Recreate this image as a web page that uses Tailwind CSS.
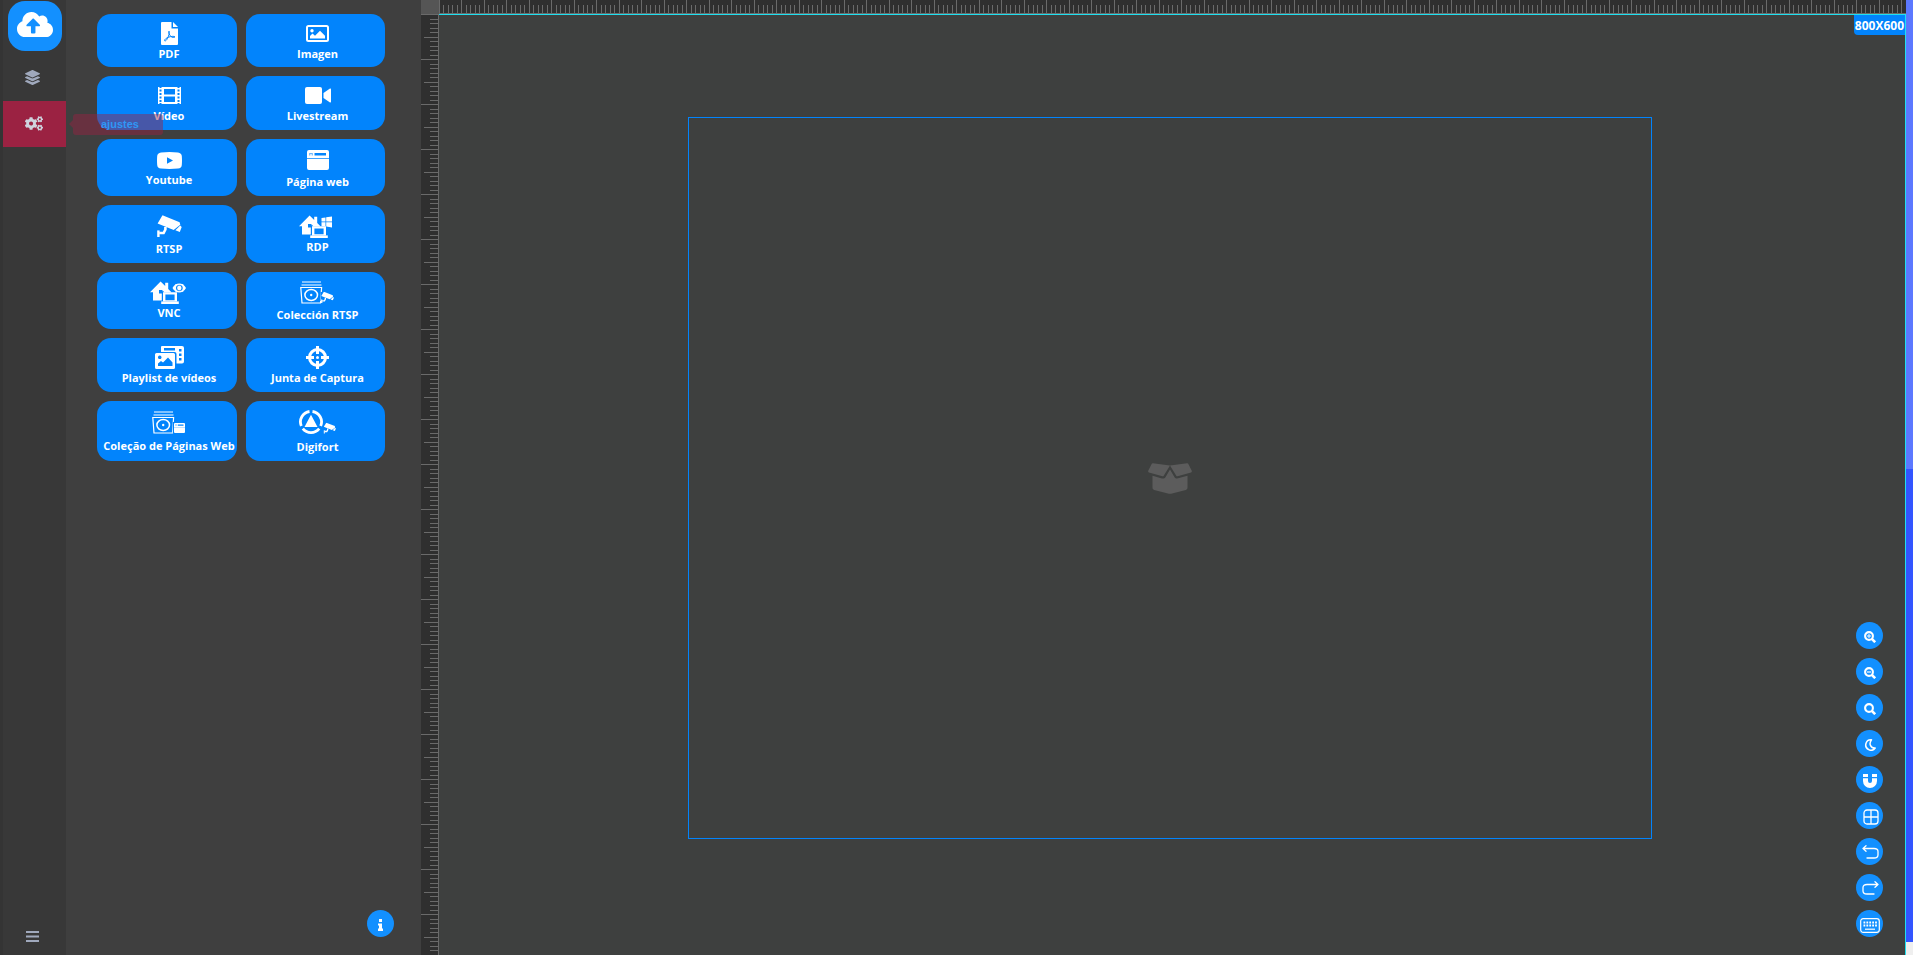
<!DOCTYPE html>
<html lang="es">
<head>
<meta charset="utf-8">
<title>Editor 800X600</title>
<script src="https://cdn.jsdelivr.net/npm/@tailwindcss/browser@4"></script>
</head>
<body class="flex h-screen overflow-hidden bg-[#3f3f3f] font-['Open_Sans',sans-serif]">

<!-- Shared icon shapes -->
<svg class="hidden" aria-hidden="true">
  <symbol id="camera" viewBox="0 0 25 23">
    <path d="M5.5.3 22.6 7.2l.7 2.6-6.6 5.2L.6 8.6z"/>
    <path d="m23.2 10.6 1.5 1.3-1.9 5.1-4.4-1.7z"/>
    <path d="M8.4 12v2.5L6.6 18H2.2" fill="none" stroke="currentColor" stroke-width="2.6"/>
    <path d="M.2 15.4h2.4V22H.2z"/>
  </symbol>
  <symbol id="home" viewBox="0 0 29 23">
    <path d="M0 11.2 10.6.4l4.6 4.5V1.7h3v6.2l3 3.1v.6h-8.8v7.8H3v-8.2z"/>
    <path fill="#0284fc" d="M9 9h3.500v3.500H9zM11.800 10.200h2v9.800h-2z"/>
    <path fill-rule="evenodd" d="M13 11.200h14v9.200H13zm2.400 2.200v5.800h9.200v-5.800z"/>
    <path d="M11.200 20.400h17.600V23H11.200z"/>
  </symbol>
  <symbol id="collection" viewBox="0 0 23 23">
    <g fill="none" stroke="currentColor">
      <path stroke-width="1.200" d="M2 1h19M1.500 4h20M2 22 .8 6.500h20.800L20.500 22z"/>
      <ellipse cx="11.200" cy="14" rx="6.300" ry="5.500" stroke-width="1.500"/>
    </g>
    <circle cx="11.200" cy="14" r="1.200"/>
  </symbol>
  <symbol id="window" viewBox="0 0 22 20">
    <path fill-rule="evenodd" d="M2 0h18a2 2 0 0 1 2 2v16a2 2 0 0 1-2 2H2a2 2 0 0 1-2-2V2a2 2 0 0 1 2-2zM7.500 3v2.400H19V3zM2.500 3v2.400h.7V3.500h1.600v1.900h.7V3zM0 8v.7h22V8z"/>
  </symbol>
  <symbol id="lens" viewBox="0 0 12 12">
    <circle cx="5" cy="5" r="3.900" fill="none" stroke="currentColor" stroke-width="2.100"/>
    <path d="m7.800 7.800 3.400 3.400" fill="none" stroke="currentColor" stroke-width="2.600"/>
  </symbol>
</svg>

<!-- Navigation rail -->
<nav class="flex w-[66px] shrink-0 flex-col border-l-3 border-[#343434] bg-[#383838]">
  <button aria-label="Subir" class="mt-px ml-[5px] flex h-[50px] w-[54px] items-center justify-center rounded-[17px] bg-[#1390ff] pb-1 text-white">
    <svg class="h-[29px] w-[36px]" viewBox="0 0 640 512" fill="currentColor"><path d="M537.6 226.6c4.1-10.7 6.4-22.4 6.4-34.6 0-53-43-96-96-96-19.7 0-38.1 6-53.3 16.2C367 64.2 315.3 32 256 32c-88.4 0-160 71.6-160 160 0 2.7.1 5.4.2 8.1C40.2 219.8 0 273.2 0 336c0 79.5 64.5 144 144 144h368c70.7 0 128-57.3 128-128 0-61.9-44-113.6-102.4-125.4zM393.4 288H328v112c0 8.8-7.2 16-16 16h-48c-8.8 0-16-7.2-16-16V288h-65.4c-14.3 0-21.4-17.2-11.3-27.3l105.4-105.4c6.2-6.2 16.4-6.2 22.6 0l105.4 105.4c10.1 10.1 2.9 27.3-11.3 27.3z"/></svg>
  </button>
  <button aria-label="Capas" class="mt-1 flex h-[46px] items-center justify-center pr-1 pb-0.5 text-[#a0a9bd]">
    <svg class="size-[15px]" viewBox="0 0 512 512" fill="currentColor"><path d="M12.41 148.02l232.94 105.67c6.8 3.09 14.49 3.09 21.29 0l232.94-105.67c16.55-7.51 16.55-32.52 0-40.03L266.65 2.31a25.607 25.607 0 0 0-21.29 0L12.41 107.98c-16.55 7.51-16.55 32.53 0 40.04zm487.18 88.28l-58.09-26.33-161.64 73.27c-7.56 3.43-15.59 5.17-23.86 5.17s-16.29-1.74-23.86-5.17L70.51 209.97l-58.1 26.33c-16.55 7.5-16.55 32.5 0 40l232.94 105.59c6.8 3.08 14.49 3.08 21.29 0L499.59 276.3c16.55-7.5 16.55-32.5 0-40zm0 127.8l-57.87-26.23-161.86 73.37c-7.56 3.43-15.59 5.17-23.86 5.17s-16.29-1.74-23.86-5.17L70.29 337.87 12.41 364.1c-16.55 7.5-16.55 32.5 0 40l232.94 105.59c6.8 3.08 14.49 3.08 21.29 0L499.59 404.1c16.55-7.5 16.55-32.5 0-40z"/></svg>
  </button>
  <button aria-label="Ajustes" aria-describedby="tip" class="relative flex h-[46px] items-center justify-center bg-[#9b2242] pr-px pb-px text-[#cfd3de]">
    <svg class="h-[15px] w-[18px]" viewBox="0 0 640 512" fill="currentColor"><path d="M512.1 191l-8.2 14.3c-3 5.3-9.4 7.5-15.1 5.4-11.8-4.4-22.6-10.7-32.1-18.6-4.6-3.8-5.8-10.5-2.8-15.7l8.2-14.3c-6.9-8-12.3-17.3-15.9-27.4h-16.5c-6 0-11.2-4.3-12.2-10.3-2-12-2.1-24.6 0-37.1 1-6 6.2-10.4 12.2-10.4h16.5c3.6-10.1 9-19.4 15.9-27.4l-8.2-14.3c-3-5.2-1.9-11.9 2.8-15.7 9.5-7.9 20.4-14.2 32.1-18.6 5.7-2.1 12.1.1 15.1 5.4l8.2 14.3c10.5-1.9 21.2-1.9 31.7 0L552 6.3c3-5.3 9.4-7.5 15.1-5.4 11.8 4.4 22.6 10.7 32.1 18.6 4.6 3.8 5.8 10.5 2.8 15.7l-8.2 14.3c6.9 8 12.3 17.3 15.9 27.4h16.5c6 0 11.2 4.3 12.2 10.3 2 12 2.1 24.6 0 37.1-1 6-6.2 10.4-12.2 10.4h-16.5c-3.6 10.1-9 19.4-15.9 27.4l8.2 14.3c3 5.2 1.9 11.9-2.8 15.7-9.5 7.9-20.4 14.2-32.1 18.6-5.7 2.1-12.1-.1-15.1-5.4l-8.2-14.3c-10.4 1.9-21.2 1.9-31.7 0zm-10.5-58.8c38.5 29.6 82.4-14.3 52.8-52.8-38.5-29.7-82.4 14.3-52.8 52.8zM386.3 286.1l33.7 16.8c10.1 5.8 14.5 18.1 10.5 29.1-8.9 24.2-26.4 46.4-42.6 65.8-7.4 8.9-20.2 11.1-30.3 5.3l-29.1-16.8c-16 13.7-34.6 24.6-54.9 31.7v33.6c0 11.6-8.3 21.6-19.7 23.6-24.6 4.2-50.4 4.4-75.9 0-11.5-2-20-11.9-20-23.6V418c-20.3-7.2-38.9-18-54.9-31.7L74 403c-10 5.8-22.9 3.6-30.3-5.3-16.2-19.4-33.3-41.6-42.2-65.7-4-10.9.4-23.2 10.5-29.1l33.3-16.8c-3.9-20.9-3.9-42.4 0-63.4L12 205.8c-10.1-5.8-14.6-18.1-10.5-29 8.9-24.2 26-46.4 42.2-65.8 7.4-8.9 20.2-11.1 30.3-5.3l29.1 16.8c16-13.7 34.6-24.6 54.9-31.7V57.1c0-11.5 8.2-21.5 19.6-23.5 24.6-4.2 50.5-4.4 76-.1 11.5 2 20 11.9 20 23.6v33.6c20.3 7.2 38.9 18 54.9 31.7l29.1-16.8c10-5.8 22.9-3.6 30.3 5.3 16.2 19.4 33.2 41.6 42.1 65.8 4 10.9.1 23.2-10 29.1l-33.7 16.8c3.9 21 3.9 42.5 0 63.5zm-117.6 21.1c59.2-77-28.7-164.9-105.7-105.7-59.2 77 28.7 164.9 105.7 105.7zm243.4 182.7l-8.2 14.3c-3 5.3-9.4 7.5-15.1 5.4-11.8-4.4-22.6-10.7-32.1-18.6-4.6-3.8-5.8-10.5-2.8-15.7l8.2-14.3c-6.9-8-12.3-17.3-15.9-27.4h-16.5c-6 0-11.2-4.3-12.2-10.3-2-12-2.1-24.6 0-37.1 1-6 6.2-10.4 12.2-10.4h16.5c3.6-10.1 9-19.4 15.9-27.4l-8.2-14.3c-3-5.2-1.9-11.9 2.8-15.7 9.5-7.9 20.4-14.2 32.1-18.6 5.7-2.1 12.1.1 15.1 5.4l8.2 14.3c10.5-1.9 21.2-1.9 31.7 0l8.2-14.3c3-5.3 9.4-7.5 15.1-5.4 11.8 4.4 22.6 10.7 32.1 18.6 4.6 3.8 5.8 10.5 2.8 15.7l-8.2 14.3c6.9 8 12.3 17.3 15.9 27.4h16.5c6 0 11.2 4.3 12.2 10.3 2 12 2.1 24.6 0 37.1-1 6-6.2 10.4-12.2 10.4h-16.5c-3.6 10.1-9 19.4-15.9 27.4l8.2 14.3c3 5.2 1.9 11.9-2.8 15.7-9.5 7.9-20.4 14.2-32.1 18.6-5.7 2.1-12.1-.1-15.1-5.4l-8.2-14.3c-10.4 1.9-21.2 1.9-31.7 0zM501.6 431c38.5 29.6 82.4-14.3 52.8-52.8-38.5-29.6-82.4 14.3-52.8 52.8z"/></svg>
    <!-- Fading tooltip -->
    <span id="tip" role="tooltip" class="absolute top-[13px] left-[70px] z-10 flex h-[21px] w-[90px] items-center rounded-[3px] bg-[#9b2242]/45 pb-0.5 pl-7 font-['Liberation_Sans',sans-serif] text-[11px] leading-4 font-bold text-[#2f97f5]">
      <span class="absolute top-[6px] -left-1 border-y-4 border-r-4 border-y-transparent border-r-[#9b2242]/45"></span>ajustes</span>
  </button>
  <button aria-label="Menú" class="mt-auto mb-3 flex h-[15px] items-center justify-center pr-[5px] text-[#a0a9bd]">
    <svg class="h-[12px] w-[13px]" viewBox="0 0 13 12" fill="currentColor"><path d="M0 1h13v2H0zM0 5.500h13v2H0zM0 10h13v2H0z"/></svg>
  </button>
</nav>

<!-- Widget panel -->
<aside class="flex w-[355px] shrink-0 flex-col justify-between bg-[#3f3f3f] pt-[14px] pr-[27px] pb-[18px] pl-[31px]">
  <div class="mr-[9px] grid grid-cols-[140px_139px] grid-rows-[53px_54px_57px_58px_57px_54px_60px] gap-[9px] text-[11px] leading-[15px] font-bold whitespace-nowrap text-white">
    <button class="flex flex-col items-center rounded-[14px] bg-[#0284fc] pt-[7px] pl-1">
      <span class="mb-px flex h-6 items-center"><svg class="h-[23px] w-[17px]" viewBox="0 0 17 23" fill="currentColor"><path d="M1 0h9.500v6.500H17V22a1 1 0 0 1-1 1H1a1 1 0 0 1-1-1V1a1 1 0 0 1 1-1z"/><path d="M12 0l5 5h-5z"/><path d="M8 9.200c-1 1.800.8 3.800 2 5.300 1.200 1.300 3.500 1.100 4 .4-.8-1-4.500-.5-6.500.3-2 .8-4.300 2.200-3.800 3.600 1.500.6 3-2.500 3.800-4.800.6-1.800 1-3.800.5-4.800z" fill="none" stroke="#0284fc" stroke-width="1"/></svg></span>
      PDF</button>
    <button class="flex flex-col items-center rounded-[14px] bg-[#0284fc] pt-[7px] pl-1">
      <span class="mb-px flex h-6 items-center"><svg class="h-[17px] w-[23px]" viewBox="0 0 23 17" fill="currentColor"><rect x="1" y="1" width="21" height="15" rx="1.500" fill="none" stroke="currentColor" stroke-width="2"/><circle cx="6" cy="5.700" r="1.700"/><path d="M4 13.500V11l2.500-2.500L9 10.700l5-5 5 5v2.800z"/></svg></span>
      Imagen</button>

    <button class="flex flex-col items-center rounded-[14px] bg-[#0284fc] pt-[7px] pl-1">
      <span class="mb-px flex h-6 items-center"><svg class="h-[17px] w-[23px]" viewBox="0 0 23 17" fill="currentColor"><path fill-rule="evenodd" d="M0 0h1.500v1h2V0h16v1h2V0H23v17h-1.500v-1h-2v1h-16v-1h-2v1H0zM1.500 2.500v2h2v-2zm0 3.500v2h2V6zm0 3.500v2h2v-2zm0 3.500v2h2v-2zM19.500 2.500v2h2v-2zm0 3.500v2h2V6zm0 3.500v2h2v-2zm0 3.500v2h2v-2zM6 2v5.500h11V2zm0 7.500V15h11V9.500z"/></svg></span>
      Vídeo</button>
    <button class="flex flex-col items-center rounded-[14px] bg-[#0284fc] pt-[7px] pl-1">
      <span class="mb-px flex h-6 items-center"><svg class="h-[17px] w-[26px]" viewBox="0 0 26 17" fill="currentColor"><rect width="17" height="17" rx="2"/><path d="M18.500 6 25 1.500q1-.3 1 .7v12.600q0 1-1 .7L18.500 11z"/></svg></span>
      Livestream</button>

    <button class="flex flex-col items-center rounded-[14px] bg-[#0284fc] pt-[9px] pl-1">
      <span class="flex h-6 items-center"><svg class="h-[17px] w-[25px]" viewBox="0 0 25 17" fill="currentColor"><path fill-rule="evenodd" d="M4 .4Q12.500-.4 21 .4q3.600.5 3.800 3.600.4 4.500 0 9-.2 3.100-3.800 3.600-8.500.8-17 0Q.4 16.100.2 13q-.4-4.500 0-9Q.4.900 4 .4zM10 5.200v6.600l6-3.300z"/></svg></span>
      Youtube</button>
    <button class="flex flex-col items-center rounded-[14px] bg-[#0284fc] pt-[9px] pl-1">
      <span class="mb-0.5 flex h-6 items-center"><svg class="h-5 w-[22px]" fill="currentColor"><use href="#window"/></svg></span>
      Página web</button>

    <button class="flex flex-col items-center rounded-[14px] bg-[#0284fc] pt-[9px] pl-1">
      <span class="mb-[3px] flex h-6 items-center"><svg class="h-[23px] w-[25px]" fill="currentColor"><use href="#camera"/></svg></span>
      RTSP</button>
    <button class="flex flex-col items-center rounded-[14px] bg-[#0284fc] pt-[9px]">
      <span class="mb-px flex h-6 items-center"><svg class="h-[23px] w-[33px]" viewBox="0 0 33 23" fill="currentColor"><use href="#home" width="29" height="23"/><path d="M22.500 3l4-.6v4.200h-4zM27.200 2.300l5.800-.9v5.200h-5.800zM22.500 7.300h4v4.200l-4-.6zM27.200 7.300H33v5.200l-5.800-.9z"/></svg></span>
      <span class="pl-1">RDP</span></button>

    <button class="flex flex-col items-center rounded-[14px] bg-[#0284fc] pt-2 pl-1">
      <span class="mb-px flex h-6 items-center"><svg class="mr-0.5 h-[23px] w-[36px]" viewBox="0 0 36 23" fill="currentColor"><use href="#home" width="29" height="23"/><path fill-rule="evenodd" d="M22.500 7C25.500 1.100 33 1.100 36 7c-3 5.900-10.500 5.900-13.500 0zm6.800-3.400a3.400 3.400 0 1 0 .1 0z"/><path d="M25.300 4.200h8v-1h-8zM25.300 10.800h8v-1h-8z"/><circle cx="29.300" cy="7" r="2.200"/></svg></span>
      VNC</button>
    <button class="flex flex-col items-center rounded-[14px] bg-[#0284fc] pt-2 pl-1">
      <span class="mb-[3px] flex h-6 items-center"><svg class="mr-px h-[23px] w-[34px]" viewBox="0 0 34 23" fill="currentColor"><use href="#collection" width="23" height="23"/><path fill="#0284fc" d="M20.500 11h3v9h-3z"/><use href="#camera" x="21" y="10.500" width="13" height="12"/></svg></span>
      Colección RTSP</button>

    <button class="flex flex-col items-center rounded-[14px] bg-[#0284fc] pt-[7px] pl-1">
      <span class="mb-px flex h-6 items-center"><svg class="h-[23px] w-[29px]" viewBox="0 0 29 23" fill="currentColor"><path fill-rule="evenodd" d="M7 0h20a2 2 0 0 1 2 2v13.500a2 2 0 0 1-2 2h-5.500V8a2 2 0 0 0-2-2H6V1a1 1 0 0 1 1-1zm2 2v2.500h11V2zM24 3v2.500h2.500V3zm0 4.500V10h2.500V7.500zm0 4.500v2.500h2.500V12z"/><path fill-rule="evenodd" d="M1.500 7h17A1.500 1.500 0 0 1 20 8.500v13a1.500 1.500 0 0 1-1.500 1.500h-17A1.500 1.500 0 0 1 0 21.500v-13A1.500 1.500 0 0 1 1.500 7zM4.700 9.500a1.800 1.800 0 1 0 .1 0zM3 20h14.500v-3.500L13 11.500l-5 5-2-1.500-3 2.500z"/></svg></span>
      Playlist de vídeos</button>
    <button class="flex flex-col items-center rounded-[14px] bg-[#0284fc] pt-[7px] pl-1">
      <span class="mb-px flex h-6 items-center"><svg class="size-[23px]" viewBox="0 0 23 23" fill="none" stroke="currentColor"><circle cx="11.500" cy="11.500" r="8" stroke-width="3"/><path stroke-width="3" d="M11.500 0v8M11.500 15V23M0 11.500h8M15 11.500H23"/><circle cx="11.500" cy="11.500" r="1.500" fill="currentColor" stroke="none"/></svg></span>
      Junta de Captura</button>

    <button class="flex flex-col items-center rounded-[14px] bg-[#0284fc] pt-[9px] pl-1">
      <span class="mb-1 flex h-6 items-center"><svg class="mr-px h-[23px] w-[34px]" viewBox="0 0 34 23" fill="currentColor"><use href="#collection" width="23" height="23"/><path fill="#0284fc" d="M20.800 11h2v11h-2z"/><use href="#window" x="22" y="12" width="11" height="10"/></svg></span>
      Coleção de Páginas Web</button>
    <button class="flex flex-col items-center rounded-[14px] bg-[#0284fc] pt-[9px] pl-1">
      <span class="mb-[5px] flex h-6 items-center"><svg class="h-6 w-[37px]" viewBox="0 0 37 24" fill="currentColor"><path fill="none" stroke="currentColor" stroke-width="2.800" d="M10.500 1.500A10.500 10.500 0 0 0 2.300 16M13.500 1.500A10.500 10.500 0 0 1 21.700 16M3.800 18.600a10.500 10.500 0 0 0 16.400 0"/><path d="m12 4.700 6.500 12.300h-13z"/><use href="#camera" x="24.500" y="12.500" width="12.500" height="11.500"/></svg></span>
      Digifort</button>
  </div>
  <button aria-label="Información" class="flex size-[27px] items-center justify-center self-end rounded-full bg-[#1390ff] text-white">
    <svg class="mt-[3px] h-[12px] w-[5px]" viewBox="0 0 5 12" fill="currentColor"><path d="M1 0h3v3H1zM0 4.500h4v5h1V12H0V9.500h1V6.500H0z"/></svg>
  </button>
</aside>

<!-- Ruled canvas -->
<div class="grid min-w-0 flex-1 grid-cols-[18px_1fr] grid-rows-[14px_1fr]">
  <div class="bg-[#555555]"></div>
  <svg class="h-[14px] w-full bg-[#2f2f2f]" shape-rendering="crispEdges" aria-hidden="true">
    <defs><pattern id="hticks" width="45" height="14" patternUnits="userSpaceOnUse"><path fill="#6a6a6a" d="M0 0h1v13H0zM22 0h1v13h-1zM4 5h1v8H4zM9 5h1v8H9zM13 5h1v8h-1zM18 5h1v8h-1zM27 5h1v8h-1zM31 5h1v8h-1zM36 5h1v8h-1zM40 5h1v8h-1zM0 13h45v1H0z"/></pattern></defs>
    <rect width="100%" height="14" fill="url(#hticks)"/>
  </svg>
  <svg class="h-full w-[18px] bg-[#2f2f2f]" shape-rendering="crispEdges" aria-hidden="true">
    <defs><pattern id="vticks" width="18" height="45" patternUnits="userSpaceOnUse"><path fill="#6a6a6a" d="M0 0h18v1H0zM3 23h14v1H3zM9 5h8v1H9zM9 9h8v1H9zM9 14h8v1H9zM9 18h8v1H9zM9 27h8v1H9zM9 32h8v1H9zM9 36h8v1H9zM9 41h8v1H9zM17 0h1v45h-1z"/></pattern></defs>
    <rect width="18" height="100%" fill="url(#vticks)"/>
  </svg>
  <main class="relative flex items-center justify-center border-t border-r border-[#1fe0f0] bg-[#3e403f] pr-[5px] pb-[14px]">
    <div class="flex h-[722px] w-[964px] items-center justify-center border border-[#0284fc]">
      <svg class="h-[35px] w-[44px] text-[#5c5c5c]" viewBox="0 0 640 512" fill="currentColor"><path d="M425.7 256c-16.9 0-32.8-9-41.4-23.4L320 126l-64.2 106.6c-8.7 14.5-24.6 23.5-41.5 23.5-4.5 0-9-.6-13.3-1.9L64 215v178c0 14.7 10 27.500 24.2 31l216.2 54.1c10.2 2.5 20.9 2.5 31 0L551.8 424c14.2-3.600 24.2-16.4 24.2-31V215l-137 39.1c-4.300 1.300-8.800 1.900-13.300 1.900zm212.6-112.2L586.800 41c-3.100-6.200-9.800-9.800-16.700-8.900L320 64l91.700 152.100c3.800 6.300 11.400 9.300 18.500 7.300l197.900-56.500c9.900-2.900 14.700-13.900 10.200-23.100zM53.200 41L1.700 143.800c-4.600 9.200.3 20.200 10.100 23l197.900 56.500c7.100 2 14.700-1 18.500-7.300L320 64 69.800 32.100c-6.900-.8-13.500 2.700-16.600 8.900z"/></svg>
    </div>

    <div class="absolute top-0 right-0 rounded-bl-[4px] bg-[#0284fc] px-px pt-px text-xs leading-[19px] font-bold text-white">800X600</div>

    <div class="absolute right-[22px] bottom-[18px] flex flex-col gap-[9px] text-white">
      <button aria-label="Acercar" class="flex size-[27px] items-center justify-center rounded-full bg-[#1390ff]"><svg class="mt-0.5 ml-px size-[12px]" viewBox="0 0 12 12"><use href="#lens"/><path d="M5 3v4M3 5h4" stroke="currentColor"/></svg></button>
      <button aria-label="Alejar" class="flex size-[27px] items-center justify-center rounded-full bg-[#1390ff]"><svg class="mt-0.5 ml-px size-[12px]" viewBox="0 0 12 12"><use href="#lens"/><path d="M3 5h4" stroke="currentColor" stroke-width="1.200"/></svg></button>
      <button aria-label="Restablecer zoom" class="flex size-[27px] items-center justify-center rounded-full bg-[#1390ff]"><svg class="mt-0.5 ml-px size-[12px]"><use href="#lens"/></svg></button>
      <button aria-label="Modo oscuro" class="flex size-[27px] items-center justify-center rounded-full bg-[#1390ff]"><svg class="mt-[3px] ml-px size-[12px]" viewBox="0 0 12 12" fill="none" stroke="currentColor" stroke-width="1.500" stroke-linejoin="round"><path d="M7.500.8A5.200 5.200 0 1 0 11.200 9C7 9.300 4.300 5 7.500.8z"/></svg></button>
      <button aria-label="Imán" class="flex size-[27px] items-center justify-center rounded-full bg-[#1390ff]"><svg class="mt-[3px] ml-px h-[14px] w-[14px]" viewBox="0 0 14 14" fill="currentColor"><path d="M0 0h5v3H0zM9 0h5v3H9zM0 4.200h5V7a2 2 0 0 0 4 0V4.200h5V7A7 7 0 0 1 0 7z"/></svg></button>
      <button aria-label="Cuadrícula" class="flex size-[27px] items-center justify-center rounded-full bg-[#1390ff]"><svg class="mt-[3px] ml-0.5 size-[16px]" viewBox="0 0 16 16" fill="none" stroke="currentColor" stroke-width="1.300"><rect x="1" y="1" width="14" height="14" rx="3"/><path d="M8 1v14M1 8h14"/></svg></button>
      <button aria-label="Deshacer" class="flex size-[27px] items-center justify-center rounded-full bg-[#1390ff]"><svg class="mt-px ml-px h-[14px] w-[17px]" viewBox="0 0 17 14" fill="none" stroke="currentColor" stroke-width="1.300" stroke-linecap="round" stroke-linejoin="round"><path d="M4 .8 1 3.500 4 6.200M1 3.500h11q4 0 4 3v3.500q0 3-4 3H5"/></svg></button>
      <button aria-label="Rehacer" class="flex size-[27px] items-center justify-center rounded-full bg-[#1390ff]"><svg class="mt-px ml-px h-[14px] w-[17px]" viewBox="0 0 17 14" fill="none" stroke="currentColor" stroke-width="1.300" stroke-linecap="round" stroke-linejoin="round"><path d="m13 .8 3 2.700-3 2.700M16 3.500H5q-4 0-4 3v3.500q0 3 4 3h7"/></svg></button>
      <button aria-label="Atajos de teclado" class="flex size-[27px] items-center justify-center rounded-full bg-[#1390ff]"><svg class="mt-[3px] ml-px h-[15px] w-[20px]" viewBox="0 0 20 15" fill="none" stroke="currentColor" stroke-width="1.200"><rect x=".7" y=".7" width="18.600" height="13.600" rx="2.500"/><path stroke-width="1.800" stroke-dasharray="1.800 1.100" d="M3.500 4.500h13.500M3.500 7.500h13.500"/><path d="M5 11.200h10"/></svg></button>
    </div>
  </main>
</div>

<!-- Page scroll track -->
<div class="flex w-[7px] shrink-0 flex-col bg-[#efefef]">
  <div class="flex-1 bg-[#5c78ff] -mb-1"></div>
  <div class="flex-1 bg-[#3355ff]"></div>
  <div class="h-[13px]"></div>
</div>
</body>
</html>
